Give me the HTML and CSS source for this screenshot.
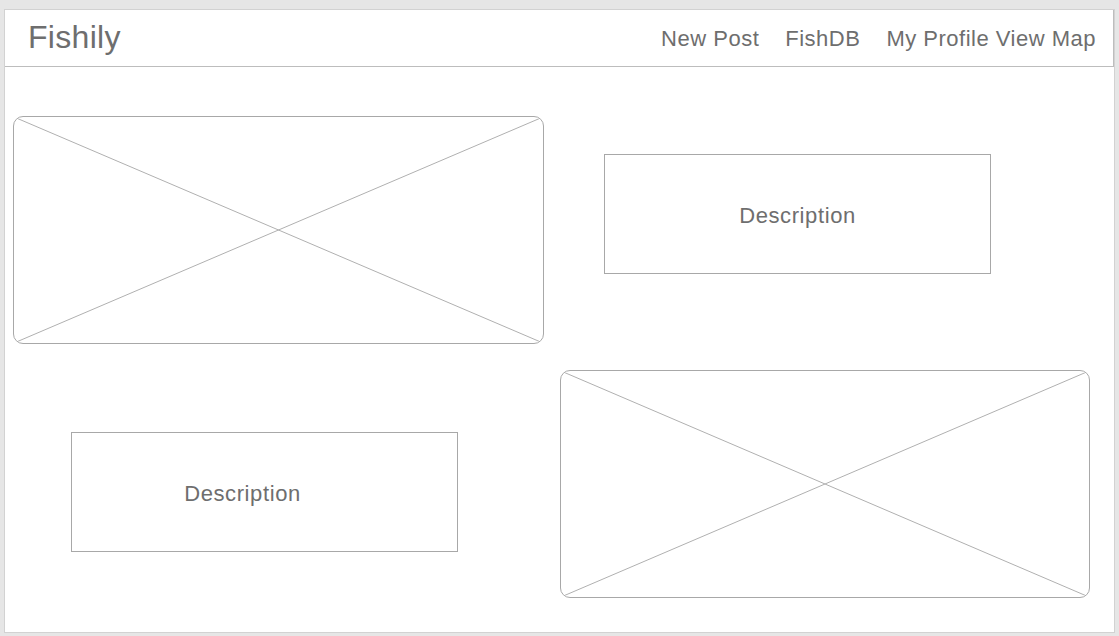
FILE: index.html
```html
<!DOCTYPE html>
<html>
<head>
<meta charset="utf-8">
<title>Fishily</title>
<link rel="stylesheet" href="styles.css">
</head>
<body>
<div class="page">
  <header class="header">
    <div class="brand">Fishily</div>
    <nav class="nav">
      <span class="nav-item">New Post</span>
      <span class="nav-item">FishDB</span>
      <span class="nav-item">My Profile View Map</span>
    </nav>
  </header>
  <main class="main">
    <div class="row row-top">
      <div class="image image-a">
        <svg class="cross" viewBox="0 0 100 100" preserveAspectRatio="none">
          <line x1="0" y1="0" x2="100" y2="100" vector-effect="non-scaling-stroke"/>
          <line x1="100" y1="0" x2="0" y2="100" vector-effect="non-scaling-stroke"/>
        </svg>
      </div>
      <div class="desc desc-a">Description</div>
    </div>
    <div class="row row-bottom">
      <div class="desc desc-b">Description</div>
      <div class="image image-b">
        <svg class="cross" viewBox="0 0 100 100" preserveAspectRatio="none">
          <line x1="0" y1="0" x2="100" y2="100" vector-effect="non-scaling-stroke"/>
          <line x1="100" y1="0" x2="0" y2="100" vector-effect="non-scaling-stroke"/>
        </svg>
      </div>
    </div>
  </main>
</div>
</body>
</html>
```

FILE: styles.css
```css
html, body {
  margin: 0;
  padding: 0;
}
body {
  background: #e6e6e6;
  font-family: "Liberation Sans", Arial, Helvetica, sans-serif;
  color: #6e6e6e;
  padding: 9px 4px 3px 4px;
  height: 636px;
  box-sizing: border-box;
  overflow: hidden;
}
.page {
  background: #ffffff;
  border: 1px solid #d2d2d2;
  height: 624px;
  box-sizing: border-box;
}
.header {
  height: 57px;
  border-bottom: 1px solid #bdbdbd;
  border-right: 1px solid #bdbdbd;
  box-sizing: border-box;
  display: flex;
  align-items: center;
  justify-content: space-between;
  padding: 0 17px 0 23px;
}
.brand {
  font-size: 32px;
  line-height: 1;
  color: #6e6e6e;
  letter-spacing: 0.3px;
  margin-top: -2px;
}
.nav {
  display: flex;
  gap: 26px;
  margin-top: 1px;
}
.nav-item {
  font-size: 22px;
  color: #6e6e6e;
  letter-spacing: 0.5px;
}
.main {
  padding: 49px 0 0 0;
}
.row {
  display: flex;
  align-items: flex-start;
}
.image {
  border: 1px solid #a8a8a8;
  border-radius: 10px;
  box-sizing: border-box;
  overflow: hidden;
  width: 531px;
  height: 228px;
}
.cross {
  display: block;
  width: 100%;
  height: 100%;
}
.cross line {
  stroke: #b0b0b0;
  stroke-width: 1;
}
.desc {
  border: 1px solid #a8a8a8;
  box-sizing: border-box;
  width: 387px;
  height: 120px;
  display: flex;
  align-items: center;
  justify-content: center;
  padding-top: 3px;
  font-size: 22px;
  letter-spacing: 0.6px;
  color: #6e6e6e;
}
.image-a {
  margin-left: 8px;
}
.desc-a {
  margin-left: 60px;
  margin-top: 38px;
}
.row-bottom {
  margin-top: 26px;
}
.desc-b {
  margin-left: 66px;
  margin-top: 62px;
  padding-right: 44px;
}
.image-b {
  margin-left: 102px;
  width: 530px;
}
```
